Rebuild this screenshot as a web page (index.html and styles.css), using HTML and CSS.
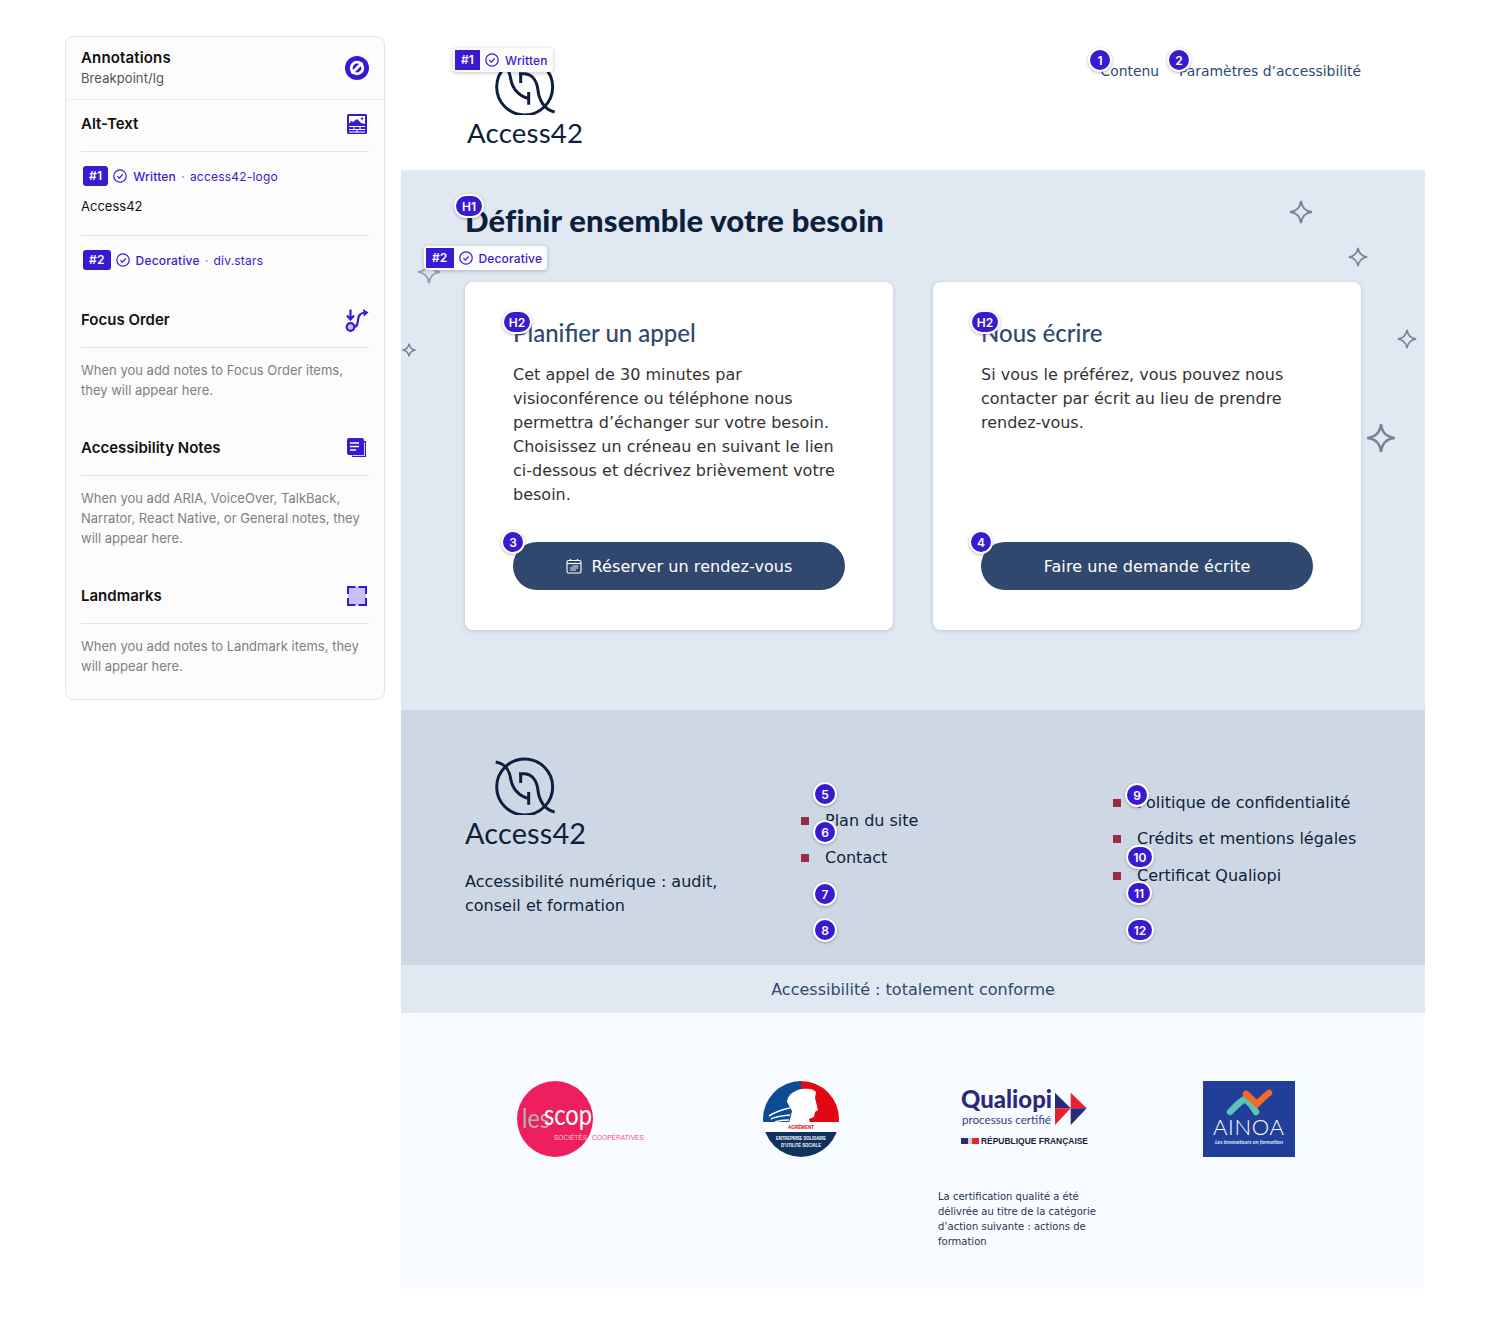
FILE: index.html
```html
<!DOCTYPE html>
<html lang="fr">
<head>
<meta charset="utf-8">
<title>Access42</title>
<link rel="stylesheet" href="styles.css">
</head>
<body>
<aside class="panel">
  <div class="panel-top">
    <div>
      <div class="panel-title">Annotations</div>
      <div class="panel-sub">Breakpoint/lg</div>
    </div>
    <svg class="ico24" viewBox="0 0 24 24"><circle cx="12" cy="12" r="12" fill="#3a1ad1"/><circle cx="12" cy="12" r="5.800" fill="none" stroke="#fff" stroke-width="2.800"/><path d="M7.500 16.500 16.500 7.500" stroke="#fff" stroke-width="2.800" stroke-linecap="round"/></svg>
  </div>
  <section class="psec">
    <div class="phead"><h3>Alt-Text</h3>
      <svg class="ico20" viewBox="0 0 20 20"><rect width="20" height="20" rx="1.500" fill="#3a1ad1"/><path d="M2 10V2h16v8l-4-1-4-4-4 3-2-1z" fill="#fff"/><circle cx="15" cy="4.600" r="1.200" fill="#3a1ad1"/><path d="M2 12.500h16M2 15.500h16M7 12.500v3M13 12.500v3M10 15.500v3M2 18h16" stroke="#fff" stroke-width="1"/></svg>
    </div>
    <div class="item">
      <span class="num">#1</span>
      <svg class="check" viewBox="0 0 14 14"><circle cx="7" cy="7" r="6.200" fill="none" stroke="#3a1ad1" stroke-width="1.200"/><path d="m4.400 7.200 1.900 1.900 3.400-3.600" fill="none" stroke="#3a1ad1" stroke-width="1.200"/></svg>
      <span class="st">Written</span><span class="dot">·</span><span class="lnk">access42-logo</span>
    </div>
    <p class="alt">Access42</p>
    <div class="item item2">
      <span class="num">#2</span>
      <svg class="check" viewBox="0 0 14 14"><circle cx="7" cy="7" r="6.200" fill="none" stroke="#3a1ad1" stroke-width="1.200"/><path d="m4.400 7.200 1.900 1.900 3.400-3.600" fill="none" stroke="#3a1ad1" stroke-width="1.200"/></svg>
      <span class="st">Decorative</span><span class="dot">·</span><span class="lnk">div.stars</span>
    </div>
  </section>
  <section class="psec">
    <div class="phead"><h3>Focus Order</h3>
      <svg class="ico24" viewBox="0 0 24 24"><circle cx="5.500" cy="19" r="3.800" fill="#c9c0f3" stroke="#3a1ad1" stroke-width="2.200"/><path d="M5.500 1.500v9M2 7.500l3.500 4 3.500-4" fill="none" stroke="#3a1ad1" stroke-width="2.200"/><path d="M9 19c5 0 3-7 5-11 1-2 3-3 5-3" fill="none" stroke="#3a1ad1" stroke-width="2.200"/><path d="M18 1l5.500 3.500-4.500 4z" fill="#3a1ad1"/></svg>
    </div>
    <p class="hint">When you add notes to Focus Order items, they will appear here.</p>
  </section>
  <section class="psec">
    <div class="phead"><h3>Accessibility Notes</h3>
      <svg class="ico20" viewBox="0 0 20 20"><path d="M5 3v16h14V3z" fill="#3a1ad1"/><rect width="17" height="17" rx="2" fill="#3a1ad1"/><path d="M3 5h9M3 8.500h9M3 12h6" stroke="#fff" stroke-width="1.500"/><path d="M17.500 4.500v13H5.500" fill="none" stroke="#fff" stroke-width=".8"/></svg>
    </div>
    <p class="hint">When you add ARIA, VoiceOver, TalkBack, Narrator, React Native, or General notes, they will appear here.</p>
  </section>
  <section class="psec psec-last">
    <div class="phead"><h3>Landmarks</h3>
      <svg class="ico20" viewBox="0 0 20 20"><rect x="1" y="1" width="18" height="18" fill="#c9c0f3"/><path d="M1 8V1h7.500M11.500 1H19v7M19 12v7h-7.500M8.500 19H1v-7" fill="none" stroke="#3a1ad1" stroke-width="2"/></svg>
    </div>
    <p class="hint">When you add notes to Landmark items, they will appear here.</p>
  </section>
</aside>

<main class="site">
  <header class="top">
    <a class="brand">
      <svg class="logo" viewBox="130 20 200 175"><circle cx="225" cy="110" r="84" fill="none" stroke="#0d1f3c" stroke-width="9"/><path d="M138 35c27 5 40 20 45 50s22 50 54 60M237 125v38M213 68v30M208 70h17c25 2 37 25 40 50 3 30 20 58 50 65" fill="none" stroke="#0d1f3c" stroke-width="9"/></svg>
      <span class="brand-name small">Access42</span>
    </a>
    <nav class="nav">
      <a>Contenu</a>
      <a>Paramètres d’accessibilité</a>
    </nav>
    <div class="tag tag1"><span class="tnum">#1</span><svg class="check" viewBox="0 0 14 14"><circle cx="7" cy="7" r="6.200" fill="none" stroke="#3a1ad1" stroke-width="1.200"/><path d="m4.400 7.200 1.900 1.900 3.400-3.600" fill="none" stroke="#3a1ad1" stroke-width="1.200"/></svg><span>Written</span></div>
    <span class="bdg h-1">1</span>
    <span class="bdg h-2">2</span>
  </header>

  <section class="hero">
    <h1>Définir ensemble votre besoin</h1>
    <div class="stars">
      <svg class="star s1" viewBox="0 0 24 24"><path d="M12 1c1 7 4 10 11 11-7 1-10 4-11 11-1-7-4-10-11-11 7-1 10-4 11-11z"/></svg>
      <svg class="star s2" viewBox="0 0 24 24"><path d="M12 1c1 7 4 10 11 11-7 1-10 4-11 11-1-7-4-10-11-11 7-1 10-4 11-11z"/></svg>
      <svg class="star s3" viewBox="0 0 24 24"><path d="M12 1c1 7 4 10 11 11-7 1-10 4-11 11-1-7-4-10-11-11 7-1 10-4 11-11z"/></svg>
      <svg class="star s4" viewBox="0 0 24 24"><path d="M12 1c1 7 4 10 11 11-7 1-10 4-11 11-1-7-4-10-11-11 7-1 10-4 11-11z"/></svg>
      <svg class="star s5" viewBox="0 0 24 24"><path d="M12 1c1 7 4 10 11 11-7 1-10 4-11 11-1-7-4-10-11-11 7-1 10-4 11-11z"/></svg>
      <svg class="star s6" viewBox="0 0 24 24"><path d="M12 1c1 7 4 10 11 11-7 1-10 4-11 11-1-7-4-10-11-11 7-1 10-4 11-11z"/></svg>
    </div>
    <div class="cards">
      <article class="card">
        <h2>Planifier un appel</h2>
        <p>Cet appel de 30 minutes par visioconférence ou téléphone nous permettra d’échanger sur votre besoin. Choisissez un créneau en suivant le lien ci-dessous et décrivez brièvement votre besoin.</p>
        <a class="btn"><svg class="cal" viewBox="0 0 16 16"><rect x="1" y="2.500" width="14" height="12.500" rx="1.500" fill="none" stroke="#fff" stroke-width="1.100"/><path d="M1 5.500h14" stroke="#fff" stroke-width="1.100"/><path d="M4.500 1v2M11.500 1v2" stroke="#fff" stroke-width="1.400"/><path d="M6.500 8h6M4 10h8M4 12h6" stroke="#fff" stroke-width=".9"/></svg>Réserver un rendez-vous</a>
        <span class="bdg c-3">3</span>
        <span class="bdg pill c-h">H2</span>
      </article>
      <article class="card">
        <h2>Nous écrire</h2>
        <p>Si vous le préférez, vous pouvez nous contacter par écrit au lieu de prendre rendez-vous.</p>
        <a class="btn">Faire une demande écrite</a>
        <span class="bdg c-3">4</span>
        <span class="bdg pill c-h">H2</span>
      </article>
    </div>
    <div class="tag tag2"><span class="tnum">#2</span><svg class="check" viewBox="0 0 14 14"><circle cx="7" cy="7" r="6.200" fill="none" stroke="#3a1ad1" stroke-width="1.200"/><path d="m4.400 7.200 1.900 1.900 3.400-3.600" fill="none" stroke="#3a1ad1" stroke-width="1.200"/></svg><span>Decorative</span></div>
    <span class="bdg pill h-h1">H1</span>
  </section>

  <footer class="foot">
    <div class="foot-brand">
      <svg class="logo" viewBox="130 20 200 175"><circle cx="225" cy="110" r="84" fill="none" stroke="#0d1f3c" stroke-width="9"/><path d="M138 35c27 5 40 20 45 50s22 50 54 60M237 125v38M213 68v30M208 70h17c25 2 37 25 40 50 3 30 20 58 50 65" fill="none" stroke="#0d1f3c" stroke-width="9"/></svg>
      <span class="brand-name">Access42</span>
      <p>Accessibilité numérique : audit, conseil et formation</p>
    </div>
    <ul class="links l1">
      <li>Plan du site</li>
      <li>Contact</li>
    </ul>
    <ul class="links l2">
      <li>Politique de confidentialité</li>
      <li>Crédits et mentions légales</li>
      <li>Certificat Qualiopi</li>
    </ul>
    <span class="bdg f5">5</span>
    <span class="bdg f6">6</span>
    <span class="bdg f7">7</span>
    <span class="bdg f8">8</span>
    <span class="bdg f9">9</span>
    <span class="bdg pill f10">10</span>
    <span class="bdg f11">11</span>
    <span class="bdg pill f12">12</span>
  </footer>

  <div class="conf">Accessibilité : totalement conforme</div>

  <section class="partners">
    <div class="partner">
      <svg class="scop" viewBox="0 0 128 76"><circle cx="38" cy="38" r="38" fill="#ee1f5e"/><text x="5" y="47" class="t-les" textLength="28" lengthAdjust="spacingAndGlyphs">les</text><text x="27" y="44" class="t-scop" textLength="48" lengthAdjust="spacingAndGlyphs">scop</text><text x="37" y="59" class="t-soc" textLength="33" lengthAdjust="spacingAndGlyphs">SOCIÉTÉS</text><text x="75" y="59" class="t-coop" textLength="52" lengthAdjust="spacingAndGlyphs">COOPÉRATIVES</text></svg>
    </div>
    <div class="partner">
      <svg class="mar" viewBox="0 0 76 76"><defs><clipPath id="round"><circle cx="38" cy="38" r="38"/></clipPath></defs><g clip-path="url(#round)"><rect width="38" height="42" fill="#0b4c94"/><rect x="38" width="38" height="42" fill="#e30613"/><path d="M39 8c6-1 12 0 14 3l-1 6 3 12-3 2-1 5-5 2 1 4H26l3-12-5-9c0-7 8-12 15-13z" fill="#fff"/><path d="M6 35c8-5 15-7 21-8M8 38c6-3 12-3 19-4M12 41c5-2 10-2 14-2" stroke="#fff" stroke-width="1.500" fill="none"/><rect y="41" width="76" height="10" fill="#fff"/><rect y="51" width="76" height="25" fill="#0f335c"/></g><text x="38" y="48" class="t-agr" textLength="26" lengthAdjust="spacingAndGlyphs">AGRÉMENT</text><text x="38" y="59" class="t-mar" textLength="50" lengthAdjust="spacingAndGlyphs">ENTREPRISE SOLIDAIRE</text><text x="38" y="66" class="t-mar" textLength="40" lengthAdjust="spacingAndGlyphs">D’UTILITÉ SOCIALE</text></svg>
    </div>
    <div class="partner">
      <svg class="qual" viewBox="0 0 128 66"><text x="0" y="27" class="t-q" textLength="91" lengthAdjust="spacingAndGlyphs">Qualiopi</text><text x="1" y="43" class="t-pc" textLength="89" lengthAdjust="spacingAndGlyphs">processus certifié</text><path d="M94 11.700 109.700 27.300H94z" fill="#2b2a77"/><path d="M94 27.300h15.700L94 44z" fill="#e8202f"/><path d="M109.700 11.700 125.700 27.300h-16z" fill="#e8202f"/><path d="M109.700 27.300h16l-16 16.700z" fill="#2b2a77"/><rect y="57" width="7" height="6" fill="#2b2a77"/><rect x="11" y="57" width="7" height="6" fill="#e8202f"/><rect x="7" y="57" width="4" height="6" fill="#ccc"/><text x="20" y="63" class="t-rf" textLength="107" lengthAdjust="spacingAndGlyphs">RÉPUBLIQUE FRANÇAISE</text></svg>
      <p class="qual-note">La certification qualité a été délivrée au titre de la catégorie d’action suivante : actions de formation</p>
    </div>
    <div class="partner">
      <svg class="ainoa" viewBox="0 0 92 76"><rect width="92" height="76" fill="#213f99"/><path d="M27 31c5-5 9-10 15-13 4 3 8 8 11 13" fill="none" stroke="#5cc2b3" stroke-width="6.500" stroke-linecap="round"/><path d="M43 13l11 10c4-4 8-8 12-11" fill="none" stroke="#f26a25" stroke-width="6.500" stroke-linecap="round"/><text x="10" y="54" class="t-ai" textLength="71">AINOA</text><text x="12" y="63" class="t-in" textLength="68" lengthAdjust="spacingAndGlyphs">Les innovateurs en formation</text></svg>
    </div>
  </section>
</main>
</body>
</html>
```

FILE: styles.css
```css
* { box-sizing: border-box; }
html, body { margin: 0; background: #fff; }
body {
  display: flex;
  align-items: flex-start;
  gap: 16px;
  padding: 36px 0 35px 65px;
  font-family: "DejaVu Sans", sans-serif;
  width: 1491px;
}

/* annotation panel */
.panel {
  width: 320px;
  flex: none;
  background: #fcfcfc;
  border: 1px solid #e5e5e5;
  border-radius: 8px;
  font-family: Inter, sans-serif;
  color: #111;
}
.panel-top {
  display: flex;
  justify-content: space-between;
  align-items: center;
  height: 63px;
  padding: 0 15px;
  border-bottom: 1px solid #ededed;
}
.panel-title { font-size: 15px; font-weight: 600; line-height: 20px; letter-spacing: .15px; }
.panel-sub { font-size: 13px; line-height: 20px; color: #555; letter-spacing: .08px; }
.psec { padding: 0 15px 24px; }
.psec:first-of-type { padding-bottom: 26px; }
.psec-last { padding-bottom: 23px; }
.phead {
  display: flex;
  justify-content: space-between;
  align-items: center;
  height: 52px;
  padding: 14px 0 17px;
  border-bottom: 1px solid #e2e2e2;
}
.phead h3 { margin: 0; font-size: 15px; font-weight: 600; line-height: 20px; }
.ico24 { width: 24px; height: 24px; flex: none; }
.ico20 { width: 20px; height: 20px; flex: none; margin-right: 2px; }
.item {
  display: flex;
  align-items: center;
  height: 20px;
  margin-top: 14px;
  padding-left: 2px;
  font-size: 12px;
  font-weight: 500;
  letter-spacing: .2px;
  color: #3a1ad1;
}
.num {
  background: #3a1ad1;
  color: #fff;
  border-radius: 3px;
  height: 20px;
  line-height: 20px;
  padding: 0 6px;
  font-weight: 600;
  font-size: 12px;
  margin-right: 5px;
}
.check { width: 14px; height: 14px; flex: none; margin-right: 6px; }
.dot { margin: 0 5px; color: #8d7ae6; }
.lnk { font-weight: 400; }
.alt {
  margin: 10px 0 34px;
  font-size: 13px;
  line-height: 20px;
}
.item2 { position: relative; }
.item2::before {
  content: "";
  position: absolute;
  left: 0;
  right: 0;
  top: -15px;
  border-top: 1px solid #e2e2e2;
}
.hint {
  margin: 12px 0 0;
  font-size: 13px;
  line-height: 20px;
  color: #808080;
}

/* site */
.site {
  width: 1024px;
  flex: none;
  display: flex;
  flex-direction: column;
}
.top {
  position: relative;
  height: 134px;
  padding: 21px 64px 0;
  display: flex;
  justify-content: space-between;
  align-items: flex-start;
}
.brand { display: flex; flex-direction: column; color: #0d1f3c; }
.logo { width: 66.7px; height: 58.3px; display: block; margin-left: 28px; }
.brand-name {
  font-family: Lato, sans-serif;
  font-size: 28.8px;
  line-height: 36px;
  color: #0d1f3c;
  display: block;
  letter-spacing: .2px;
}
.brand-name.small { font-size: 27.6px; margin: 0 0 0 2px; }
.nav {
  display: flex;
  gap: 20px;
  margin-top: 2px;
  font-size: 13.9px;
  line-height: 24px;
  color: #2f4a70;
}
.bdg {
  position: absolute;
  display: flex;
  align-items: center;
  justify-content: center;
  width: 24px;
  height: 24px;
  border: 2px solid #fff;
  border-radius: 12px;
  background: #3a1ad1;
  color: #fff;
  font-family: Inter, sans-serif;
  font-size: 12px;
  font-weight: 600;
  box-shadow: 0 1px 3px rgba(20, 20, 60, .3);
}
.pill { width: 30px; }
.h-1 { left: 687px; top: 12px; }
.h-2 { left: 766px; top: 12px; }
.tag {
  position: absolute;
  display: flex;
  align-items: center;
  height: 24px;
  padding: 2px 5px 2px 2px;
  background: #fcfcfc;
  border-radius: 4px;
  box-shadow: 0 1px 4px rgba(20, 20, 60, .25);
  font-family: Inter, sans-serif;
  font-size: 12px;
  font-weight: 500;
  letter-spacing: .15px;
  color: #3a1ad1;
}
.tag .check { margin: 0 6px 0 5px; }
.tnum {
  background: #3a1ad1;
  color: #fff;
  font-weight: 600;
  line-height: 20px;
  padding: 0 6px;
}
.tag1 { left: 52px; top: 12px; }
.tag2 { left: 23px; top: 76px; }

.hero {
  position: relative;
  height: 540px;
  padding: 0 64px 80px;
  background: #e0e8f1;
}
.hero h1 {
  margin: 0;
  padding-top: 30px;
  height: 112px;
  font-family: Lato, sans-serif;
  font-size: 31px;
  line-height: 40px;
  font-weight: 900;
  letter-spacing: .15px;
  color: #0d1f3c;
}
.star { position: absolute; fill: none; stroke: #7b8199; stroke-width: 2; }
.s1 { left: 888px; top: 30px; width: 24px; height: 24px; }
.s2 { left: 947px; top: 77px; width: 20px; height: 20px; }
.s3 { left: 996px; top: 159px; width: 20px; height: 20px; }
.s4 { left: 965px; top: 253px; width: 30px; height: 30px; }
.s5 { left: 16px; top: 90px; width: 24px; height: 24px; stroke: #9aa3b5; }
.s6 { left: 1px; top: 173px; width: 14px; height: 14px; stroke-width: 2.5; }
.cards { display: flex; gap: 40px; position: relative; }
.card {
  position: relative;
  flex: 1;
  height: 348px;
  padding: 35px 48px 40px;
  background: #fff;
  border-radius: 8px;
  box-shadow: 0 1px 4px rgba(40, 60, 100, .2);
  display: flex;
  flex-direction: column;
}
.card h2 {
  margin: 0 0 14px;
  font-family: Lato, sans-serif;
  font-weight: 500;
  font-size: 24px;
  line-height: 32px;
  color: #2f4a70;
}
.card p {
  margin: 0;
  font-size: 16px;
  line-height: 24px;
  color: #333;
}
.btn {
  margin-top: auto;
  height: 48px;
  border-radius: 24px;
  background: #30486e;
  color: #fff;
  font-size: 16px;
  letter-spacing: .08px;
  display: flex;
  align-items: center;
  justify-content: center;
  gap: 10px;
}
.cal { width: 16px; height: 16px; }
.c-3 { left: 36px; top: 248px; }
.c-h { left: 37px; top: 28px; }
.h-h1 { left: 53px; top: 24px; }

.foot {
  position: relative;
  height: 255px;
  background: #cdd8e4;
  color: #0d1f3c;
  display: flex;
  padding: 47px 0 0 64px;
}
.foot-brand { width: 272px; flex: none; margin-right: 64px; }
.foot-brand p {
  margin: 19px 0 0;
  font-size: 16px;
  line-height: 24px;
  color: #0d1f3c;
}
.links {
  list-style: none;
  margin: 0;
  padding: 0;
  font-size: 16px;
  line-height: 24px;
  display: flex;
  flex-direction: column;
  gap: 12.5px;
}
.links li { position: relative; padding-left: 24px; }
.links li::before {
  content: "";
  position: absolute;
  left: 0;
  top: 8px;
  width: 8px;
  height: 8px;
  background: #9b2c45;
}
.l1 { width: 312px; flex: none; padding-top: 52px; }
.l2 { padding-top: 33.5px; }
.f5 { left: 412px; top: 72px; }
.f6 { left: 412px; top: 110px; }
.f7 { left: 412px; top: 172px; }
.f8 { left: 412px; top: 208px; }
.f9 { left: 724px; top: 73px; }
.f10 { left: 725px; top: 135px; width: 28px; }
.f11 { left: 725px; top: 171px; width: 26px; }
.f12 { left: 725px; top: 208px; width: 28px; }

.conf {
  height: 48px;
  padding-top: 1px;
  background: #e0e8f1;
  color: #2f4a70;
  font-size: 16px;
  line-height: 48px;
  text-align: center;
}
.partners {
  height: 275px;
  background: #f8fbff;
  padding: 68px 64px 0;
  display: grid;
  grid-template-columns: repeat(4, 224px);
  align-items: start;
}
.partner { display: flex; flex-direction: column; align-items: center; }
.scop { width: 128px; height: 76px; margin-left: 8px; }
.mar { width: 76px; height: 76px; }
.qual { width: 128px; height: 66px; }
.ainoa { width: 92px; height: 76px; }
.qual-note {
  align-self: flex-start;
  margin: 42px 0 0 25px;
  width: 166px;
  font-size: 10px;
  line-height: 15px;
  color: #263550;
}
.t-les { font-family: Lato, sans-serif; font-size: 27px; fill: #b9aeb0; }
.t-scop { font-family: Lato, sans-serif; font-size: 28px; fill: #fff; }
.t-soc { font-family: "Liberation Sans", sans-serif; font-size: 7px; fill: #fbd0dd; }
.t-coop { font-family: "Liberation Sans", sans-serif; font-size: 7px; fill: #f0518a; }
.t-agr { font-family: "Liberation Sans", sans-serif; font-size: 5.5px; font-weight: 700; fill: #c8102e; text-anchor: middle; }
.t-mar { font-family: "Liberation Sans", sans-serif; font-size: 4.5px; font-weight: 700; fill: #fff; text-anchor: middle; }
.t-q { font-family: Lato, sans-serif; font-size: 24px; font-weight: 900; fill: #2b2a77; }
.t-pc { font-family: Lato, sans-serif; font-size: 12px; fill: #3a3a85; }
.t-rf { font-family: "Liberation Sans", sans-serif; font-size: 8.3px; font-weight: 700; fill: #1b1b35; }
.t-ai { font-family: Lato, sans-serif; font-size: 22px; font-weight: 300; fill: #fff; }
.t-in { font-family: Lato, sans-serif; font-size: 5px; font-style: italic; font-weight: 700; fill: #dfe6ff; }
```
